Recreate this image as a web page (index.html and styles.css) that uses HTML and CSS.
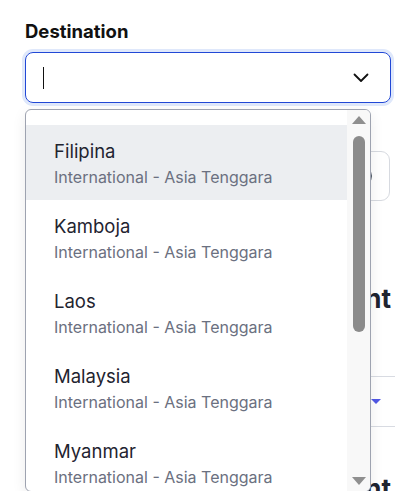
FILE: index.html
```html
<!DOCTYPE html>
<html lang="en">
<head>
  <meta charset="UTF-8" />
  <meta name="viewport" content="width=device-width, initial-scale=1.0"/>
  <title>Destination</title>
  <link rel="stylesheet" href="styles.css">
</head>
<body>
  <div class="page">
    <div class="field">
      <label class="field-label" for="destination">Destination</label>
      <div class="combo">
        <div class="combo-input" id="destination">
          <span class="caret"></span>
          <svg class="chevron" width="16" height="10" viewBox="0 0 16 10">
            <polyline points="1.5,1.5 8,8 14.5,1.5" fill="none" stroke="#111" stroke-width="1.8" stroke-linecap="round" stroke-linejoin="round"/>
          </svg>
        </div>

        <div class="dropdown">
          <ul class="options">
            <li class="option active">
              <div class="opt-title">Filipina</div>
              <div class="opt-sub">International - Asia Tenggara</div>
            </li>
            <li class="option">
              <div class="opt-title">Kamboja</div>
              <div class="opt-sub">International - Asia Tenggara</div>
            </li>
            <li class="option">
              <div class="opt-title">Laos</div>
              <div class="opt-sub">International - Asia Tenggara</div>
            </li>
            <li class="option">
              <div class="opt-title">Malaysia</div>
              <div class="opt-sub">International - Asia Tenggara</div>
            </li>
            <li class="option">
              <div class="opt-title">Myanmar</div>
              <div class="opt-sub">International - Asia Tenggara</div>
            </li>
            <li class="option">
              <div class="opt-title">Singapura</div>
              <div class="opt-sub">International - Asia Tenggara</div>
            </li>
          </ul>
          <div class="scrollbar">
            <span class="arrow up"></span>
            <span class="thumb"></span>
            <span class="track"></span>
            <span class="arrow down"></span>
          </div>
        </div>
      </div>
    </div>

    <!-- content behind the open list -->
    <div class="date-box">
      <span class="date-icon"></span>
    </div>

    <h3 class="section-title">Insurance Amount</h3>

    <div class="row-line">
      <span class="sort-caret"></span>
    </div>

    <h3 class="section-title second">Insurance Amount</h3>
  </div>
</body>
</html>
```

FILE: styles.css
```css
html, body {
  margin: 0;
  height: 100%;
  overflow: hidden;
}

body {
  font-family: Inter, "Noto Sans", sans-serif;
  background-color: #ffffff;
  color: #111827;
}

.page {
  padding: 20px 4px 0 25px;
}

.field-label {
  display: block;
  font-size: 18.5px;
  font-weight: 700;
  line-height: 23px;
  color: #111111;
  margin-bottom: 9px;
}

.combo {
  position: relative;
}

.combo-input {
  height: 49px;
  border: 1px solid #2148d6;
  border-radius: 8px;
  box-shadow: 0 0 0 3px #dfe8fb;
  display: flex;
  align-items: center;
  justify-content: space-between;
  padding: 0 21px 0 17px;
}

.caret {
  width: 1px;
  height: 22px;
  background-color: #111;
}

.chevron {
  margin-top: 1px;
}

/* open list */
.dropdown {
  position: absolute;
  top: 57px;
  left: 0;
  width: 344px;
  height: 381px;
  background-color: #ffffff;
  border: 1px solid #9ea3b0;
  border-radius: 6px;
  box-shadow: 0 4px 14px rgba(0,0,0,0.08);
  display: flex;
  overflow: hidden;
  z-index: 5;
}

.options {
  list-style: none;
  margin: 0;
  padding: 15px 0 0;
  flex: 1;
  overflow: hidden;
}

.option {
  padding: 14px 20px 12px 28px;
}

.option.active {
  background-color: #eceef1;
}

.opt-title {
  font-size: 18.5px;
  line-height: 25px;
  color: #1f2430;
}

.opt-sub {
  font-size: 16px;
  line-height: 22px;
  margin-top: 2px;
  color: #6b7080;
}

.scrollbar {
  width: 23px;
  background-color: #f8f8f8;
  display: flex;
  flex-direction: column;
  align-items: center;
  padding: 6px 0 6px 0;
  box-sizing: border-box;
}

.arrow {
  width: 0;
  height: 0;
  border-left: 7px solid transparent;
  border-right: 7px solid transparent;
}

.arrow.up {
  border-bottom: 8px solid #8f8f8f;
}

.arrow.down {
  border-top: 8px solid #8f8f8f;
}

.thumb {
  width: 12px;
  height: 196px;
  margin-top: 12px;
  border-radius: 6px;
  background-color: #8b8b8b;
}

.track {
  flex: 1;
}

/* background form */
.date-box {
  margin-top: 48px;
  height: 50px;
  width: 365px;
  border: 1px solid #d7dae0;
  border-radius: 9px;
  display: flex;
  align-items: center;
  justify-content: flex-end;
  padding-right: 17px;
  box-sizing: border-box;
}

.date-icon {
  width: 16px;
  height: 16px;
  border: 2px solid #4b5563;
  border-radius: 50%;
}

.section-title {
  margin: 82px 0 0;
  width: 366px;
  text-align: right;
  font-size: 26px;
  font-weight: 700;
  line-height: 32px;
  white-space: nowrap;
  color: #1f2430;
}

.row-line {
  margin-top: 61px;
  height: 49px;
  border-top: 1px solid #d8dbe2;
  border-bottom: 1px solid #d8dbe2;
  margin-right: -10px;
  display: flex;
  align-items: center;
  padding-left: 346px;
}

.sort-caret {
  width: 0;
  height: 0;
  border-left: 5px solid transparent;
  border-right: 5px solid transparent;
  border-top: 5px solid #5158e6;
}

.section-title.second {
  margin-top: 46px;
}
```
